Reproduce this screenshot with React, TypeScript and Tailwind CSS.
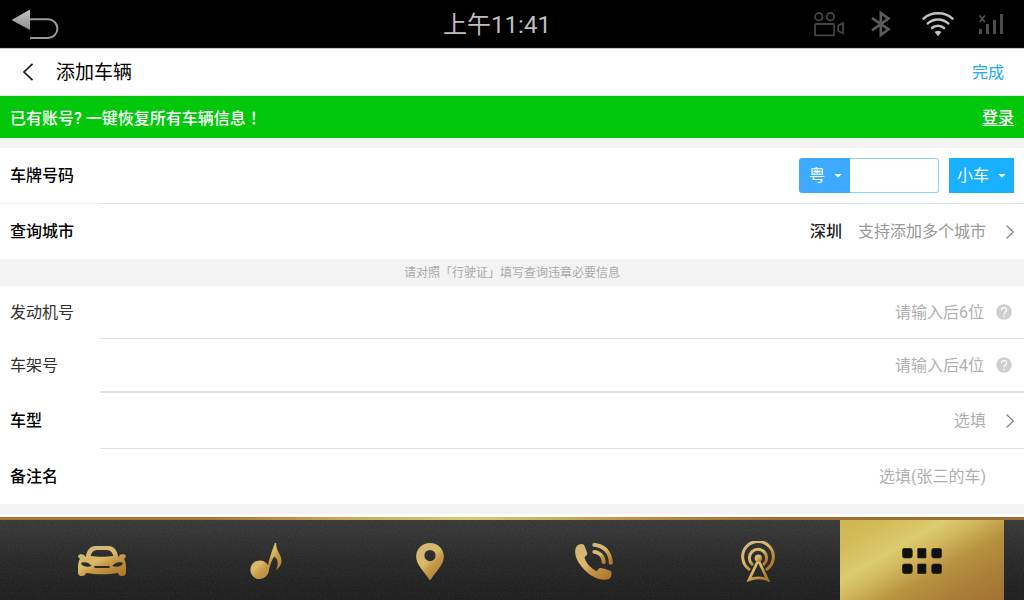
import React, { useState } from 'react';

const GoldGradient: React.FC<{ id: string }> = ({ id }) => (
  <defs>
    <linearGradient id={id} x1="0.1" y1="0" x2="0.9" y2="1">
      <stop offset="0" stopColor="#d2b67a" />
      <stop offset="0.45" stopColor="#d9b968" />
      <stop offset="0.6" stopColor="#c69a48" />
      <stop offset="1" stopColor="#ab762b" />
    </linearGradient>
  </defs>
);

const CarIcon = () => (
  <svg width="48" height="30" viewBox="0 0 144 90" aria-hidden="true">
    <GoldGradient id="gold-car" />
    <path
      fill="url(#gold-car)"
      fillRule="evenodd"
      d="M23 33C27 13 36 0 52 0H92C108 0 117 13 121 33L126 27C129 24 140 23 143 28C145 33 142 37 138 38C142 45 144 54 144 62V80C144 87 139 90 132 90C125 90 121 87 120 81C90 86 54 86 24 81C23 87 19 90 12 90C5 90 0 87 0 80V62C0 54 2 45 6 38C2 37 -1 33 1 28C4 23 15 24 18 27ZM38 30C58 33 86 33 106 30C103 19 97 12 86 12H58C47 12 41 19 38 30ZM10 54C16 63 30 64 41 60C35 51 24 47 15 49C10 50 9 52 10 54ZM134 54C128 63 114 64 103 60C109 51 120 47 129 49C134 50 135 52 134 54ZM49 60V63C49 65 50 66 52 66H92C94 66 95 65 95 63V60Z"
    />
  </svg>
);

const MusicIcon = () => (
  <svg width="32" height="36" viewBox="0 0 94 109" aria-hidden="true">
    <GoldGradient id="gold-music" />
    <path
      fill="url(#gold-music)"
      d="M28 53C39 53 48 58 53 67C58 45 66 20 74 0H78C77 26 94 34 94 54C94 66 86 76 77 82C84 70 86 52 73 42C66 47 62 61 56 81C55 97 43 109 28 109C12 109 0 97 0 81C0 65 12 53 28 53Z"
    />
  </svg>
);

const PinIcon = () => (
  <svg width="28" height="37" viewBox="0 0 84 112" aria-hidden="true">
    <GoldGradient id="gold-pin" />
    <path
      fill="url(#gold-pin)"
      fillRule="evenodd"
      d="M42 0C66 0 84 18 84 41C84 66 60 85 45 110Q42 114 39 110C24 85 0 66 0 41C0 18 18 0 42 0ZM42 21A17 17 0 1 0 42 55A17 17 0 1 0 42 21Z"
    />
  </svg>
);

const PhoneIcon = () => (
  <svg width="38" height="37" viewBox="0 0 112 110" aria-hidden="true">
    <GoldGradient id="gold-phone" />
    <path
      fill="url(#gold-phone)"
      d="M10 5Q18 1 26 5C30 15 36 25 36 32C36 38 29 38 28 44C32 60 48 76 62 83C68 82 68 74 76 74C86 75 98 80 107 84C110 92 108 103 100 107C84 113 58 107 36 88C14 68 0 46 0 27C0 16 3 8 10 5Z"
    />
    <path
      fill="url(#gold-phone)"
      d="M55 0C88 0 112 26 112 60Q111 65 106 65Q101 65 100 60C101 32 82 12 55 11Q51 10 51 6Q51 1 55 0Z"
    />
    <path
      fill="url(#gold-phone)"
      d="M55 21C76 21 91 38 91 58Q90 63 85 63Q80 63 79 58C79 43 70 33 55 32Q51 31 51 27Q51 22 55 21Z"
    />
  </svg>
);

const RadioIcon = () => (
  <svg width="34" height="41" viewBox="0 0 102 122" fill="none" aria-hidden="true">
    <GoldGradient id="gold-radio" />
    <g stroke="url(#gold-radio)" strokeWidth="9" strokeLinecap="round">
      <path d="M24 84A46 46 0 1 1 78 84" />
      <path d="M33 69A26 26 0 1 1 69 69" />
      <path d="M52 57L24 116Q52 104 80 116Z" strokeWidth="8" strokeLinejoin="miter" />
    </g>
    <circle cx="52" cy="51" r="11" fill="url(#gold-radio)" />
  </svg>
);

const AppsIcon = () => (
  <svg width="40" height="26" viewBox="0 0 120 78" fill="#101010" stroke="#2c2815" strokeWidth="2" aria-hidden="true">
    <rect x="1" y="1" width="30" height="29" rx="7" />
    <rect x="47" y="1" width="25" height="29" rx="2" />
    <rect x="89" y="1" width="30" height="29" rx="7" />
    <rect x="1" y="48" width="30" height="29" rx="7" />
    <rect x="47" y="48" width="25" height="29" rx="2" />
    <rect x="89" y="48" width="30" height="29" rx="7" />
  </svg>
);

const ChevronRight = () => (
  <svg width="8" height="14" viewBox="0 0 8 14" fill="none" stroke="#858585" strokeWidth="1.2" aria-hidden="true">
    <path d="M0.5 0.5L7.3 7L0.5 13.5" />
  </svg>
);

const StatusBar: React.FC = () => (
  <header className="grid h-12 grid-cols-3 items-center border-b border-[#0c0c0c] bg-black">
    <button type="button" aria-label="返回" className="w-fit pl-[11px]">
      <svg width="48" height="32" viewBox="0 0 48 32" fill="none">
        <defs>
          <linearGradient id="back-fill" x1="0" y1="0" x2="0" y2="1">
            <stop offset="0" stopColor="#c4c4c4" />
            <stop offset="1" stopColor="#8e8e8e" />
          </linearGradient>
        </defs>
        <path d="M0.5 12L19 1.5V22Z" fill="url(#back-fill)" />
        <path d="M19 11.2H37A9.4 9.4 0 0 1 37 30H19" stroke="#9a9a9a" strokeWidth="2" />
      </svg>
    </button>
    <time className="pt-0.5 pr-[30px] text-center text-[24px] leading-8 text-[#bebebe]">上午11:41</time>
    <div className="flex items-center justify-end pr-5">
      <svg width="32" height="28" viewBox="0 0 32 28" fill="none" stroke="#444444" strokeWidth="1.8" aria-hidden="true">
        <circle cx="6.8" cy="6.7" r="3.7" />
        <circle cx="18.4" cy="6.7" r="3.7" />
        <rect x="3" y="14" width="19.2" height="11.4" rx="1" />
        <path d="M31 13V23.2L26.2 21V15.6Z" />
      </svg>
      <svg className="ml-6" width="24" height="28" viewBox="0 0 24 28" fill="none" stroke="#5c5c5c" strokeWidth="2.6" aria-hidden="true">
        <path d="M4 8L20.5 19.4L12.8 25V3L20.5 8.6L4 20.4" />
      </svg>
      <svg className="ml-7" width="34" height="28" viewBox="0 0 34 28" fill="none" stroke="#c0c0c0" strokeWidth="2.6" strokeLinecap="round" aria-hidden="true">
        <path d="M3.5 8.6C11 1.4 25 1.4 32.5 8.6" />
        <path d="M7.8 13.4C13.5 8.2 22.5 8.2 28.2 13.4" />
        <path d="M12 18C15.5 14.9 20.5 14.9 24 18" />
        <path d="M15.8 22.2Q18 20.8 20.2 22.2L18 25Z" fill="#c0c0c0" strokeWidth="1.6" />
      </svg>
      <svg className="ml-6" width="26" height="28" viewBox="0 0 26 28" aria-hidden="true">
        <path d="M1.5 5.5L7 12M7 5.5L1.5 12" stroke="#5a5a5a" strokeWidth="1.4" />
        <path d="M1 19H4V24H1ZM8 14H11V24H8ZM15 10H18V24H15ZM22 4H25V24H22Z" fill="#4e4e4e" />
      </svg>
    </div>
  </header>
);

interface PickerProps {
  label: string;
  options: string[];
  className: string;
}

const Picker: React.FC<PickerProps> = ({ label, options, className }) => (
  <div className="relative">
    <select aria-label={label} className={`block h-[35px] appearance-none text-[16px] text-white outline-none ${className}`}>
      {options.map((option) => (
        <option key={option}>{option}</option>
      ))}
    </select>
    <svg className="pointer-events-none absolute top-4 right-2" width="8" height="4" viewBox="0 0 8 4" fill="#fff" aria-hidden="true">
      <path d="M0.5 0H7.5L4 3.8Z" />
    </svg>
  </div>
);

interface DigitsFieldProps {
  id: string;
  label: string;
  placeholder: string;
  divider: string;
}

const DigitsField: React.FC<DigitsFieldProps> = ({ id, label, placeholder, divider }) => {
  const [value, setValue] = useState('');

  return (
    <div className="flex bg-white">
      <label htmlFor={id} className="flex w-[100px] items-center pl-[10px] text-[#333]">
        {label}
      </label>
      <div className={`flex flex-1 items-center gap-3 border-[#e0e0e0] pr-3 ${divider}`}>
        <input
          id={id}
          type="text"
          value={value}
          onChange={(e) => setValue(e.target.value)}
          placeholder={placeholder}
          className="h-[52px] min-w-0 flex-1 text-right outline-none placeholder:text-[#b0b0b0]"
        />
        <button type="button" aria-label={`${label}说明`}>
          <svg width="16" height="16" viewBox="0 0 16 16" fill="none">
            <circle cx="8" cy="8" r="7.8" fill="#cfcfcf" />
            <path d="M5.4 6.4C5.4 2.8 10.6 2.8 10.6 6.1C10.6 8 8 8 8 10.4" stroke="#fff" strokeWidth="1.2" />
            <circle cx="8" cy="12.4" r="0.8" fill="#fff" />
          </svg>
        </button>
      </div>
    </div>
  );
};

const navItems = [
  { name: '汽车', Icon: CarIcon },
  { name: '音乐', Icon: MusicIcon },
  { name: '导航', Icon: PinIcon },
  { name: '电话', Icon: PhoneIcon },
  { name: '收音机', Icon: RadioIcon },
  { name: '应用', Icon: AppsIcon },
];

const BottomNav: React.FC = () => {
  const [active, setActive] = useState('应用');

  return (
    <footer className="border-t-[3px] border-white">
      <div className="h-[3px] bg-[linear-gradient(90deg,#a8732c_0%,#a8732c_20%,#c9a650_33%,#dcc86c_46%,#b98b3d_64%,#a06c2c_76%,#a06c2c_100%)]" />
      <div className="relative bg-[linear-gradient(180deg,#363636,#242424_50%,#191919)]">
        {/* brushed grain over the panel */}
        <svg className="absolute inset-0 h-full w-full opacity-10" aria-hidden="true">
          <filter id="grain">
            <feTurbulence type="fractalNoise" baseFrequency="0.6" numOctaves="2" seed="4" />
            <feColorMatrix type="saturate" values="0" />
          </filter>
          <rect width="100%" height="100%" filter="url(#grain)" />
        </svg>
        <nav className="relative grid grid-cols-6 px-5">
          {navItems.map(({ name, Icon }) => (
            <button
              key={name}
              type="button"
              aria-label={name}
              onClick={() => setActive(name)}
              className={`flex h-20 items-center justify-center pt-0.5 ${
                active === name
                  ? 'bg-[linear-gradient(150deg,#cfb554_0%,#d3bb58_15%,#dccb70_35%,#d2b95f_45%,#b8923f_62%,#ab7f38_80%,#a27234_100%)]'
                  : ''
              }`}
            >
              <Icon />
            </button>
          ))}
        </nav>
      </div>
    </footer>
  );
};

export default function App() {
  const [plate, setPlate] = useState('');
  const [remark, setRemark] = useState('');

  return (
    <div className="flex min-h-screen flex-col bg-[#f3f3f3] font-['Roboto','Noto_Sans_CJK_SC',sans-serif] text-[16px] leading-6 text-black">
      <StatusBar />

      <div className="flex h-12 items-center border-y border-t-[#c8c8c8] border-b-[#e6e6e6] bg-white pr-5 pl-[22px]">
        <button type="button" aria-label="后退">
          <svg width="12" height="18" viewBox="0 0 12 18" fill="none" stroke="#111" strokeWidth="1.6">
            <path d="M10.5 0.8L2 9L10.5 17.2" />
          </svg>
        </button>
        <h1 className="ml-[22px] flex-1 pt-0.5 text-[19px]">添加车辆</h1>
        <button type="button" className="pt-0.5 text-[#1ba9fa]">完成</button>
      </div>

      <div className="flex h-[42px] items-center justify-between bg-[#02c80c] px-[10px] pt-0.5 font-medium text-white">
        <p>
          已有账号? 一键恢复所有车辆信息<span className="font-['Noto_Sans_CJK_TC',sans-serif]">！</span>
        </p>
        <a href="#login" className="underline underline-offset-2">登录</a>
      </div>

      <form className="mt-[10px] flex flex-1 flex-col" onSubmit={(e) => e.preventDefault()}>
        <div className="flex h-14 bg-white">
          <label htmlFor="plate" className="flex w-[100px] items-center border-b border-[#f3f3f3] pl-[10px] font-medium">
            车牌号码
          </label>
          <div className="flex flex-1 items-center justify-end border-b border-[#e0e0e0] pr-[10px]">
            <Picker label="省份" options={['粤', '京', '沪', '浙']} className="w-[51px] rounded-l-[3px] bg-[#3daaff] pl-[10px]" />
            <input
              id="plate"
              type="text"
              value={plate}
              onChange={(e) => setPlate(e.target.value)}
              className="h-[35px] w-[89px] rounded-r-[3px] border border-l-0 border-[#8fcefc] px-2 outline-none"
            />
            <div className="ml-[10px]">
              <Picker label="车辆类型" options={['小车', '大车']} className="w-[65px] bg-[#19b0ff] pl-2" />
            </div>
          </div>
        </div>

        <button type="button" className="flex h-[55px] items-center bg-white pr-[10px] pl-[10px] text-left">
          <span className="flex-1 font-medium">查询城市</span>
          <span className="font-medium text-[#222]">深圳</span>
          <span className="ml-4 text-[#999]">支持添加多个城市</span>
          <span className="ml-5">
            <ChevronRight />
          </span>
        </button>

        <p className="h-[27px] text-center text-[12px] leading-[28px] text-[#aaa]">请对照「行驶证」填写查询违章必要信息</p>

        <DigitsField id="engine" label="发动机号" placeholder="请输入后6位" divider="border-b" />
        <DigitsField id="frame" label="车架号" placeholder="请输入后4位" divider="border-b-2" />

        <button type="button" className="flex h-14 bg-white text-left">
          <span className="flex h-full w-[100px] items-center pl-[10px] font-medium">车型</span>
          <span className="flex h-full flex-1 items-center justify-end border-b border-[#e0e0e0] pr-[10px]">
            <span className="mr-5 text-[#b0b0b0]">选填</span>
            <ChevronRight />
          </span>
        </button>

        <div className="flex h-[55px] bg-white">
          <label htmlFor="remark" className="flex w-[100px] items-center pl-[10px] font-medium">
            备注名
          </label>
          <input
            id="remark"
            type="text"
            value={remark}
            onChange={(e) => setRemark(e.target.value)}
            placeholder="选填(张三的车)"
            className="min-w-0 flex-1 pr-[38px] text-right outline-none placeholder:text-[#b0b0b0]"
          />
        </div>
      </form>

      <BottomNav />
    </div>
  );
}
